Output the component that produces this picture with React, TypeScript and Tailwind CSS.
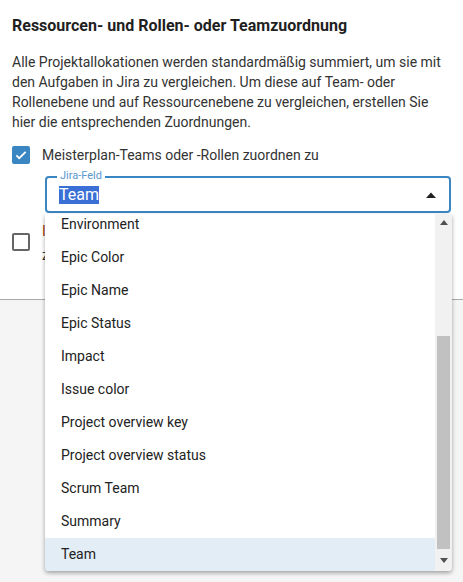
import React from "react";

const options = [
  "Environment",
  "Epic Color",
  "Epic Name",
  "Epic Status",
  "Impact",
  "Issue color",
  "Project overview key",
  "Project overview status",
  "Scrum Team",
  "Summary",
  "Team",
];

export default function App() {
  return (
    <div className="relative h-[582px] w-[463px] overflow-hidden bg-[#f5f5f5] font-['Roboto',sans-serif] text-[#212121]">
      {/* Settings panel */}
      <div className="h-[300px] border-b border-[#a9a9a9] bg-white px-3 pt-[15px]">
        <h2 className="text-[16px] font-bold leading-[22px] text-[#1f1f1f]">
          Ressourcen- und Rollen- oder Teamzuordnung
        </h2>
        <p className="mt-[15px] text-[14px] leading-[20px] text-[#333]">
          Alle Projektallokationen werden standardmäßig summiert, um sie mit den Aufgaben in Jira zu
          vergleichen. Um diese auf Team- oder Rollenebene und auf Ressourcenebene zu vergleichen,
          erstellen Sie hier die entsprechenden Zuordnungen.
        </p>

        <label className="mt-[13px] flex items-center gap-3">
          <span className="flex h-[18px] w-[18px] items-center justify-center rounded-[2px] bg-[#3a86c2]">
            <svg width="14" height="14" viewBox="0 0 24 24" fill="none" stroke="white" strokeWidth="3">
              <path d="M4 12.5l5 5L20 6.5" />
            </svg>
          </span>
          <span className="text-[14px] leading-[20px] text-[#333]">
            Meisterplan-Teams oder -Rollen zuordnen zu
          </span>
        </label>

        {/* Select */}
        <div className="relative ml-[33px] mt-[11px] flex h-[37px] w-[406px] items-center rounded-[4px] border-2 border-[#3a86c2] pl-3 pr-3">
          <span className="absolute -top-[9px] left-[10px] bg-white px-[3px] text-[11px] leading-[14px] text-[#5a98cf]">
            Jira-Feld
          </span>
          <span className="bg-[#3a6fd6] text-[16px] leading-[18px] text-white">Team</span>
          <svg className="ml-auto" width="12" height="8" viewBox="0 0 12 8">
            <path d="M1 7L6 1.5L11 7z" fill="#222" />
          </svg>
        </div>

        <label className="mt-[6px] flex items-start gap-3">
          <span className="mt-[14px] h-[18px] w-[18px] rounded-[2px] border-2 border-[#666]" />
          <span className="text-[14px] leading-[24px]">
            <span className="text-[#a3410c]">Individuelle Ressourcen zuordnen</span>
            <br />
            <span className="text-[#333]">zu Jira-Benutzern</span>
          </span>
        </label>
      </div>

      {/* Dropdown list */}
      <div className="absolute left-[45px] top-[214px] flex h-[357px] w-[407px] overflow-hidden rounded-b-[4px] bg-white shadow-[0_2px_4px_rgba(0,0,0,0.35)]">
        <ul className="-mt-[6px] flex-1">
          {options.map((o) => (
            <li
              key={o}
              className={`flex h-[33px] items-center px-4 text-[14px] text-[#222] ${
                o === "Team" ? "bg-[#e3edf6]" : ""
              }`}
            >
              {o}
            </li>
          ))}
        </ul>
        {/* Scrollbar */}
        <div className="flex w-[17px] flex-col bg-[#f1f1f1]">
          <div className="flex h-[14px] items-center justify-center pt-[2px]">
            <svg width="8" height="5" viewBox="0 0 8 5">
              <path d="M0 5L4 0L8 5z" fill="#505050" />
            </svg>
          </div>
          <div className="h-[108px]" />
          <div className="mx-[2px] h-[213px] bg-[#c1c1c1]" />
          <div className="flex flex-1 items-center justify-center">
            <svg width="8" height="5" viewBox="0 0 8 5">
              <path d="M0 0L4 5L8 0z" fill="#505050" />
            </svg>
          </div>
        </div>
      </div>
    </div>
  );
}
